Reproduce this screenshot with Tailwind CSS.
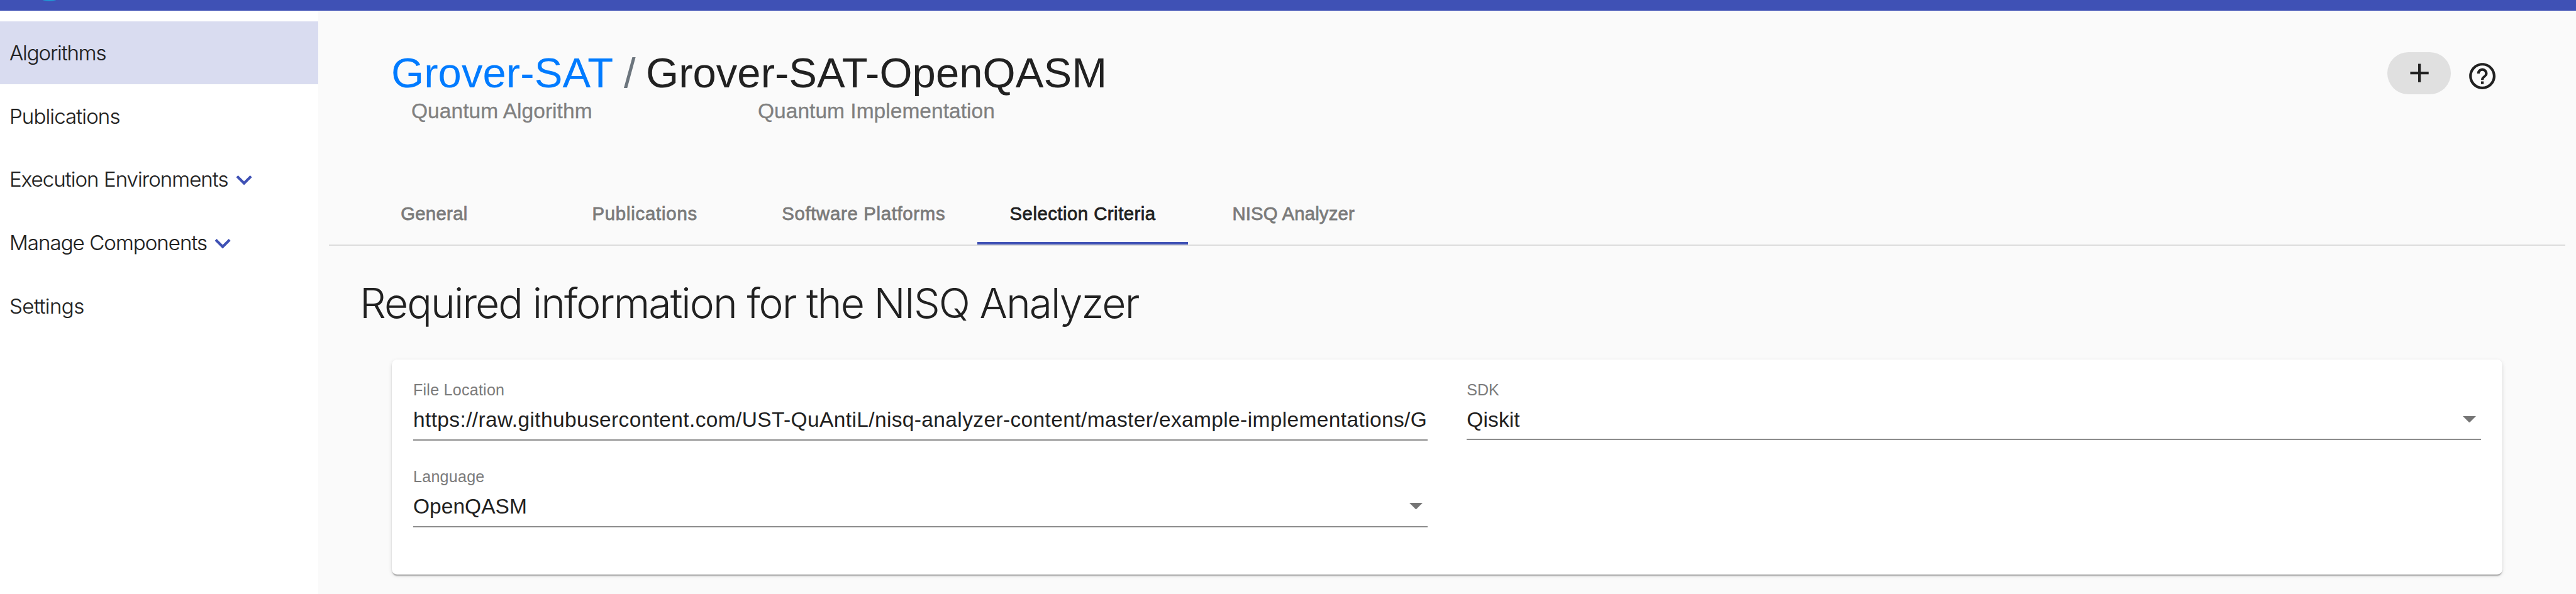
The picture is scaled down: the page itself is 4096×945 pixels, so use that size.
<!DOCTYPE html>
<html lang="en">
<head>
<meta charset="utf-8">
<title>Grover-SAT-OpenQASM</title>
<script src="https://cdn.jsdelivr.net/npm/@tailwindcss/browser@4"></script>
</head>
<body class="w-[4096px] h-[945px] overflow-hidden bg-[#fafafa] text-[#212121] font-['Liberation_Sans',Arial,sans-serif] flex flex-col whitespace-nowrap">
  <header class="h-[17px] shrink-0 bg-[#3f51b5] pl-[65px] overflow-hidden">
    <div class="w-[27px] h-[10px] -mt-[8px] rounded-[50%] bg-[#2196d3]"></div>
  </header>

  <div class="flex flex-1 min-h-0">
    <nav class="w-[506px] shrink-0 bg-white pt-[17px] font-[Inter,sans-serif] font-light text-[33px] [-webkit-text-stroke:0.2px]">
      <a class="flex items-center h-[100px] mb-px pt-[2px] pl-[15px] bg-[#d9dcf0] tracking-[-1.1px]">Algorithms</a>
      <a class="flex items-center h-[100.5px] pt-px pl-[15px] tracking-[-0.86px]">Publications</a>
      <a class="flex items-center h-[100.5px] pl-[15px] tracking-[-0.93px]">Execution Environments
        <svg class="size-[50.2px]" viewBox="0 0 24 24" fill="#3f51b5"><path d="M16.59 8.59L12 13.17 7.41 8.59 6 10l6 6 6-6z"/></svg>
      </a>
      <a class="flex items-center h-[100.5px] pt-px pl-[15px] tracking-[-0.93px]">Manage Components
        <svg class="size-[50.2px]" viewBox="0 0 24 24" fill="#3f51b5"><path d="M16.59 8.59L12 13.17 7.41 8.59 6 10l6 6 6-6z"/></svg>
      </a>
      <a class="flex items-center h-[100.5px] pt-[2px] pl-[15px] tracking-[-0.54px]">Settings</a>
    </nav>

    <main class="flex-1 min-w-0 pl-[17px] pr-[17px]">
      <div class="flex h-[271.5px] pl-[99px]">
        <div class="w-[405px] pt-[61px]">
          <div class="flex h-[76px] leading-[76px] text-[67px]">
            <a class="w-[370px] text-[#007bff] tracking-[0.08px]">Grover-SAT</a><span class="text-[#6c757d]">/</span>
          </div>
          <div class="mt-[3px] pl-[32px] h-[40px] leading-[40px] text-[33.5px] tracking-[0.05px] text-[#808080] [-webkit-text-stroke:0.3px]">Quantum Algorithm</div>
        </div>
        <div class="pt-[61px]">
          <h1 class="h-[76px] leading-[76px] text-[67px] tracking-[0.04px]">Grover-SAT-OpenQASM</h1>
          <div class="mt-[3px] pl-[178px] h-[40px] leading-[40px] text-[33.5px] tracking-[0.03px] text-[#808080] [-webkit-text-stroke:0.3px]">Quantum Implementation</div>
        </div>
        <div class="ml-auto mr-[107px] pt-[66px] flex items-start gap-[25px]">
          <button class="flex items-center justify-center w-[100.4px] h-[67px] rounded-full bg-[#e0e0e0]">
            <svg class="size-[50.2px]" viewBox="0 0 24 24" fill="#212121"><path d="M19 13h-6v6h-2v-6H5v-2h6V5h2v6h6z"/></svg>
          </button>
          <svg class="size-[50.2px] mt-[13px]" viewBox="0 0 24 24" fill="#212121"><path d="M11 18h2v-2h-2v2zm1-16C6.48 2 2 6.48 2 12s4.480 10 10 10 10-4.480 10-10S17.520 2 12 2zm0 18c-4.410 0-8-3.590-8-8s3.590-8 8-8 8 3.590 8 8-3.590 8-8 8zm0-14c-2.210 0-4 1.790-4 4h2c0-1.100.9-2 2-2s2 .9 2 2c0 2-3 1.750-3 5h2c0-2.250 3-2.500 3-5 0-2.210-1.790-4-4-4z"/></svg>
        </div>
      </div>

      <div class="flex h-[102.5px] border-b-2 border-[#dcdcdc] text-[29.3px] text-[#7b7b7b]">
        <div class="w-[334.8px] pt-[3px] flex items-center justify-center tracking-[0.33px] [-webkit-text-stroke:0.8px]">General</div>
        <div class="w-[334.8px] pt-[3px] flex items-center justify-center tracking-[0.8px] [-webkit-text-stroke:0.8px]">Publications</div>
        <div class="w-[361.3px] pt-[3px] flex items-center justify-center tracking-[0.7px] [-webkit-text-stroke:0.8px]">Software Platforms</div>
        <div class="w-[335.4px] pt-[7px] flex items-center justify-center tracking-[0.5px] [-webkit-text-stroke:0.8px] text-[#212121] border-b-4 border-[#3f51b5]">Selection Criteria</div>
        <div class="w-[334.8px] pt-[3px] flex items-center justify-center tracking-[0.18px] [-webkit-text-stroke:0.8px]">NISQ Analyzer</div>
      </div>

      <h2 class="mt-[51px] pl-[49px] h-[80px] leading-[80px] font-[Inter,sans-serif] font-light text-[66px] tracking-[-1.97px]">Required information for the NISQ Analyzer</h2>

      <section class="mt-[50px] ml-[100px] w-[3356px] h-[341.5px] rounded-[8.4px] bg-white px-[34px] pt-[33.4px] grid grid-cols-2 gap-x-[62.700px] content-start shadow-[0_4px_2px_-2px_rgba(0,0,0,0.2),0_2px_2px_0_rgba(0,0,0,0.14),0_2px_6px_0_rgba(0,0,0,0.12)]">
        <div class="min-w-0 h-[137.4px]">
          <div class="h-[30px] leading-[30px] text-[25.1px] tracking-[0.23px] text-[#7b7b7b]">File Location</div>
          <div class="mt-[10.6px] h-[44px] leading-[44px] text-[33.5px] tracking-[0.37px] overflow-hidden">https://raw.githubusercontent.com/UST-QuAntiL/nisq-analyzer-content/master/example-implementations/Grover-SAT</div>
          <div class="mt-[9px] h-[2px] bg-[#8c8c8c]"></div>
        </div>
        <div class="min-w-0 h-[137.4px]">
          <div class="h-[30px] leading-[30px] text-[25.1px] tracking-[-0.1px] text-[#7b7b7b]">SDK</div>
          <div class="mt-[10.700px] h-[44px] leading-[44px] text-[33.5px] tracking-[0.1px] flex items-center justify-between pr-[8px]">Qiskit
            <svg class="w-[21px] h-[10.500px] -mt-[2px]" viewBox="0 0 10 5" fill="#757575"><path d="M0 0h10L5 5z"/></svg>
          </div>
          <div class="mt-[8px] h-[2px] bg-[#8c8c8c]"></div>
        </div>
        <div class="min-w-0">
          <div class="h-[30px] leading-[30px] text-[25.1px] tracking-[0.24px] text-[#7b7b7b]">Language</div>
          <div class="mt-[11px] h-[44px] leading-[44px] text-[33.5px] tracking-[0.04px] flex items-center justify-between pr-[8px]">OpenQASM
            <svg class="w-[21px] h-[10.500px] -mt-[2px]" viewBox="0 0 10 5" fill="#757575"><path d="M0 0h10L5 5z"/></svg>
          </div>
          <div class="mt-[9px] h-[2px] bg-[#8c8c8c]"></div>
        </div>
      </section>
    </main>
  </div>
</body>
</html>
